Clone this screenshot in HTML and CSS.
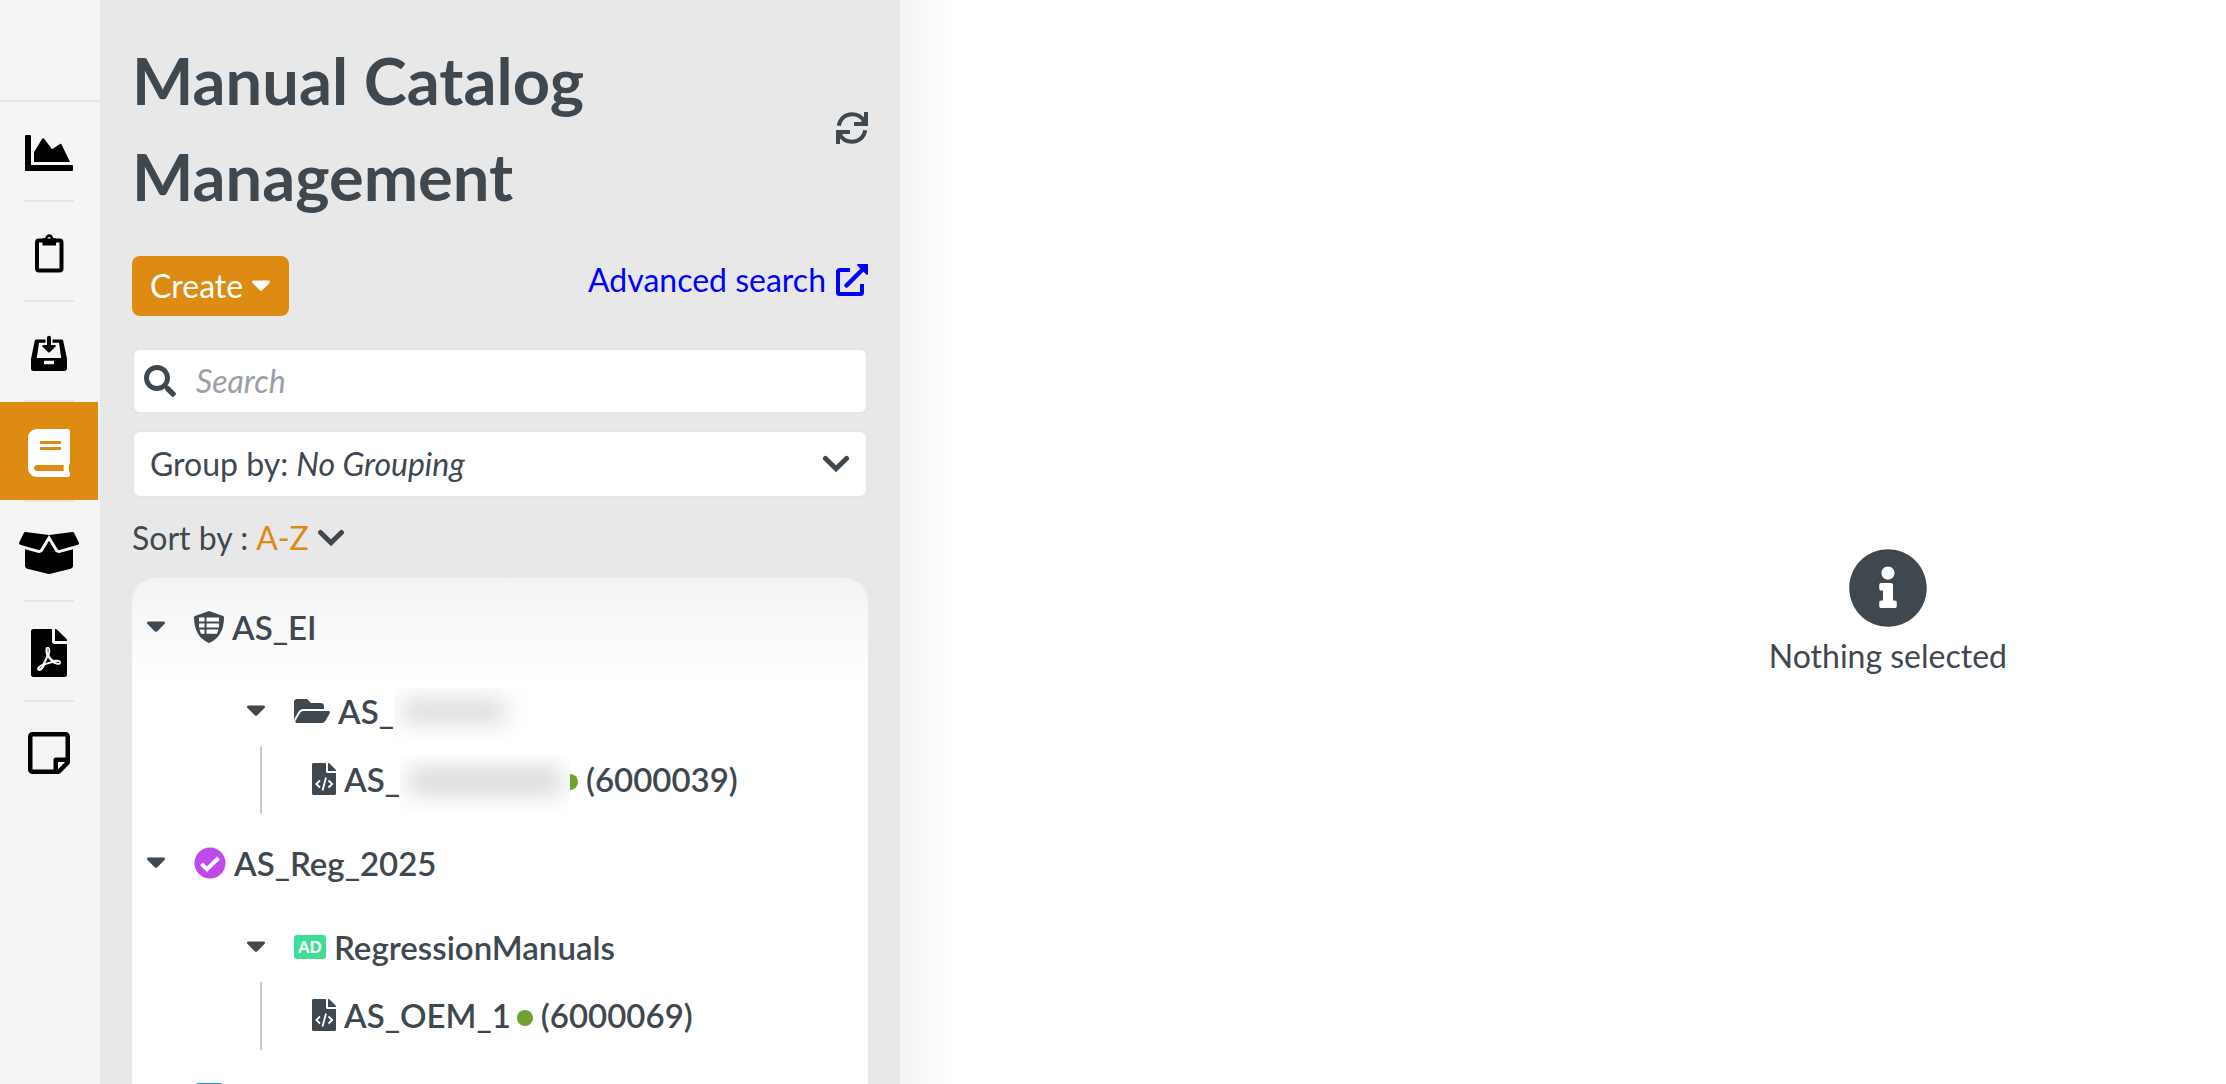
FILE: index.html
```html
<!DOCTYPE html>
<html lang="en">
<head>
    <meta charset="UTF-8">
    <meta name="viewport" content="width=device-width, initial-scale=1.0">
    <title>Manual Catalog Management</title>
    <link rel="stylesheet" href="styles.css">
</head>
<body>
    <!-- Shared icons -->
    <svg class="sprite" aria-hidden="true">
        <symbol id="caret" viewBox="0 0 20 12">
            <path d="M2.500 .5h15c1.500 0 2 1.500 1 2.500l-7.200 7.200c-.8.800-1.800.8-2.600 0L1.500 3c-1-1-.5-2.500 1-2.500z"/>
        </symbol>
        <symbol id="chevron" viewBox="0 0 28 18">
            <path d="M3.500 3.500L14 13.800 24.500 3.500" fill="none" stroke="currentColor" stroke-width="5" stroke-linecap="round"/>
        </symbol>
        <symbol id="file-code" viewBox="0 0 24 32">
            <path d="M14 0v8.500c0 .8.700 1.500 1.500 1.500H24v20.500c0 .8-.7 1.500-1.500 1.500h-21C.7 32 0 31.300 0 30.500v-29C0 .7.7 0 1.500 0zM16 0h.4c.4 0 .8.200 1.100.4l6.100 6.100c.2.300.4.700.4 1.100V8h-8z"/>
            <path d="M8 17.500L4.300 21 8 24.500M16.500 17.500L20.200 21l-3.700 3.500M14 14.500l-3.500 13" fill="none" stroke="#fff" stroke-width="1.800"/>
        </symbol>
    </svg>

    <div class="app">
        <nav class="sidebar">
            <div class="sidebar-top"></div>
            <a class="nav-item" href="#" aria-label="Dashboard">
                <svg width="48" height="48" viewBox="0 0 512 512"><path d="M500 384c6.600 0 12 5.400 12 12v40c0 6.600-5.400 12-12 12H12c-6.600 0-12-5.400-12-12V76c0-6.600 5.400-12 12-12h40c6.600 0 12 5.400 12 12v308h436zM372.700 159.500L288 216l-85.300-113.700c-5.100-6.800-15.500-6.300-19.900 1L96 248v104h384l-89.900-187.800c-3.200-6.500-11.400-8.700-17.400-4.700z"/></svg>
            </a>
            <a class="nav-item" href="#" aria-label="Tasks">
                <svg width="30" height="40" viewBox="0 0 30 40"><rect x="3" y="7.500" width="24.500" height="30" rx="2" fill="none" stroke="currentColor" stroke-width="4"/><path fill-rule="evenodd" d="M8.500 12.500V6.300c0-.6.400-1 1-1h1.700C11.500 3 13 1.200 15.200 1.200S19 3 19.300 5.300H21c.6 0 1 .4 1 1v6.200zM15.200 4a1.700 1.700 0 1 0 0 3.400 1.700 1.700 0 0 0 0-3.400z"/></svg>
            </a>
            <a class="nav-item" href="#" aria-label="Inbox">
                <svg width="36" height="36" viewBox="0 0 36 36"><path fill-rule="evenodd" d="M5.300 4.500h9.200v3.200H8L5.800 23h24.400L28 7.700h-6.500V4.500h9.200c.8 0 1.500.6 1.600 1.400L36 24v9.500c0 1.400-1.100 2.500-2.500 2.500h-31A2.500 2.500 0 0 1 0 33.500V24L3.700 5.900c.1-.8.800-1.400 1.600-1.400zM13 25.800v3.400h10v-3.400z"/><path d="M16 2.800a2 2 0 0 1 4 0V10h4c.8 0 1.200.9.600 1.500l-5.800 5.700c-.4.400-1.200.4-1.600 0l-5.800-5.700c-.6-.6-.2-1.500.6-1.500h4z"/></svg>
            </a>
            <a class="nav-item active" href="#" aria-label="Manuals">
                <svg width="42" height="48" viewBox="0 0 448 512"><path d="M448 360V24c0-13.300-10.700-24-24-24H96C43 0 0 43 0 96v320c0 53 43 96 96 96h328c13.300 0 24-10.700 24-24v-16c0-7.500-3.500-14.300-8.900-18.700-4.200-15.400-4.200-59.300 0-74.700 5.400-4.300 8.900-11.100 8.900-18.600zM128 134c0-3.300 2.700-6 6-6h212c3.300 0 6 2.700 6 6v20c0 3.300-2.700 6-6 6H134c-3.300 0-6-2.700-6-6v-20zm0 64c0-3.300 2.700-6 6-6h212c3.300 0 6 2.700 6 6v20c0 3.300-2.700 6-6 6H134c-3.300 0-6-2.700-6-6v-20zm253.400 250H96c-17.700 0-32-14.300-32-32 0-17.600 14.400-32 32-32h285.400c-1.900 17.100-1.900 46.900 0 64z"/></svg>
            </a>
            <a class="nav-item" href="#" aria-label="Packages">
                <svg width="60" height="48" viewBox="0 0 640 512"><path d="M425.700 256c-16.900 0-32.800-9-41.400-23.400L320 126l-64.200 106.600c-8.700 14.500-24.600 23.500-41.500 23.500-4.500 0-9-.6-13.300-1.900L64 215v178c0 14.700 10 27.500 24.200 31l216.200 54.100c10.200 2.500 20.900 2.500 31 0L551.800 424c14.200-3.600 24.200-16.400 24.200-31V215l-137 39.100c-4.300 1.300-8.800 1.900-13.300 1.900zm212.600-112.200L586.800 41c-3.100-6.200-9.800-9.800-16.700-8.900L320 64l91.700 152.100c3.800 6.300 11.400 9.300 18.500 7.300l197.900-56.500c9.900-2.900 14.700-13.900 10.200-23.100zM53.200 41L1.700 143.800c-4.600 9.200.3 20.200 10.100 23l197.900 56.500c7.100 2 14.700-1 18.500-7.300L320 64 69.800 32.100c-6.900-.8-13.500 2.700-16.600 8.900z"/></svg>
            </a>
            <a class="nav-item" href="#" aria-label="PDF">
                <svg width="36" height="48" viewBox="0 0 384 512"><path d="M181.900 256.100c-5-16-4.900-46.900-2-46.900 8.400 0 7.600 36.900 2 46.900zm-1.700 47.200c-7.700 20.200-17.300 43.300-28.400 62.700 18.300-7 39-17.200 62.900-21.900-12.700-9.600-24.900-23.400-34.500-40.800zM86.100 428.100c0 .8 13.200-5.400 34.900-40.200-6.700 6.300-29.100 24.500-34.900 40.200zM248 160h136v328c0 13.300-10.700 24-24 24H24c-13.300 0-24-10.700-24-24V24C0 10.700 10.700 0 24 0h200v136c0 13.200 10.800 24 24 24zm-8 171.800c-20-12.200-33.300-29-42.700-53.800 4.500-18.500 11.600-46.600 6.200-64.200-4.700-29.400-42.400-26.500-47.800-6.800-5 18.300-.4 44.100 8.100 77-11.600 27.600-28.700 64.600-40.800 85.800-.1 0-.1.100-.2.100-27.100 13.900-73.600 44.500-54.500 68 5.600 6.900 16 10 21.500 10 17.900 0 35.700-18 61.100-61.800 25.800-8.500 54.100-19.100 79-23.200 21.700 11.800 47.100 19.500 64 19.500 29.200 0 31.200-32 19.700-43.400-13.900-13.600-54.300-9.700-73.600-7.200zM377 105L279 7c-4.500-4.500-10.600-7-17-7h-6v128h128v-6.100c0-6.300-2.500-12.400-7-16.900zm-74.100 255.300c4.100-2.700-2.500-11.900-42.800-9 37.100 15.800 42.800 9 42.800 9z"/></svg>
            </a>
            <a class="nav-item" href="#" aria-label="Notes">
                <svg width="42" height="48" viewBox="0 0 448 512"><path d="M448 348.100V80c0-26.500-21.500-48-48-48H48C21.500 32 0 53.500 0 80v352c0 26.500 21.500 48 48 48h268.100a48 48 0 0 0 33.900-14.100l83.900-83.900a48 48 0 0 0 14.100-33.900zm-128 80v-76.100h76.100l-76.100 76.100zM400 80v224H296c-13.300 0-24 10.700-24 24v104H48V80h352z"/></svg>
            </a>
        </nav>

        <section class="catalog">
            <header class="catalog-header">
                <h1>Manual Catalog Management</h1>
                <button class="refresh" type="button" aria-label="Refresh">
                    <svg width="32" height="32" viewBox="0 0 32 32"><path d="M2.800 13.800C3.800 7 9 2.300 16 2.300c5.300 0 9.700 2.600 12.200 7" fill="none" stroke="currentColor" stroke-width="4"/><path d="M28 0h3.200c.5 0 .8.300.8.800V13c0 .6-.4 1-1 1H18.800c-.5 0-.8-.3-.8-.8V10h7l3-3z"/><path d="M29.200 18.200C28.200 25 23 29.700 16 29.700c-5.300 0-9.700-2.600-12.200-7" fill="none" stroke="currentColor" stroke-width="4"/><path d="M4 32H.8c-.5 0-.8-.3-.8-.8V19c0-.6.4-1 1-1h12.200c.5 0 .8.300.8.800V22H7l-3 3z"/></svg>
                </button>
            </header>

            <div class="actions">
                <button class="create" type="button">Create <svg width="20" height="12"><use href="#caret"/></svg></button>
                <a class="advanced" href="#">Advanced search
                    <svg width="32" height="32" viewBox="0 0 32 32"><path d="M14 6H3.500C2.700 6 2 6.700 2 7.500v21c0 .8.700 1.500 1.500 1.500h21c.8 0 1.500-.7 1.500-1.500V20" fill="none" stroke="currentColor" stroke-width="4"/><path d="M10.500 21.500L27 5" fill="none" stroke="currentColor" stroke-width="4.500" stroke-linecap="round"/><path d="M22 0h9c.6 0 1 .4 1 1v9c0 1-1 1.300-1.700.6l-9-9C20.700 1 21 0 22 0z"/></svg>
                </a>
            </div>

            <label class="field search">
                <svg width="32" height="32" viewBox="0 0 512 512"><path d="M505 442.700L405.300 343c-4.500-4.500-10.600-7-17-7H372c27.600-35.300 44-79.700 44-128C416 93.100 322.900 0 208 0S0 93.100 0 208s93.100 208 208 208c48.300 0 92.700-16.400 128-44v16.300c0 6.400 2.500 12.500 7 17l99.700 99.700c9.400 9.400 24.600 9.400 33.900 0l28.300-28.300c9.400-9.400 9.400-24.600.1-34zM208 336c-70.700 0-128-57.200-128-128 0-70.700 57.200-128 128-128 70.700 0 128 57.200 128 128 0 70.700-57.200 128-128 128z"/></svg>
                <input type="text" placeholder="Search" aria-label="Search">
            </label>

            <div class="field group">
                <label for="group-by">Group by:</label>
                <select id="group-by">
                    <option>No Grouping</option>
                </select>
                <svg width="28" height="18"><use href="#chevron"/></svg>
            </div>

            <div class="sort">
                <label for="sort-by">Sort by :</label>
                <select id="sort-by">
                    <option>A-Z</option>
                </select>
                <svg width="28" height="18"><use href="#chevron"/></svg>
            </div>

            <ul class="tree">
                <li class="node">
                    <div class="row">
                        <svg class="caret" width="20" height="12"><use href="#caret"/></svg>
                        <svg width="30" height="32" viewBox="0 0 30 32"><path d="M15 0l14 5c.6.200 1 .7 1 1.300C30 19 25 28 15 32 5 28 0 19 0 6.300 0 5.700.4 5.200 1 5z"/><path d="M5 6.500h5.500v4H5zM12.500 6.500H25v4H12.500zM5 12.500h5.500v4H5zM12.500 12.500H25v4H12.500zM5.500 18.500h5v4.300H7zM12.500 18.500h12L23 22.800H12.500z" fill="#fff"/></svg>
                        <span>AS_EI</span>
                    </div>
                    <ul class="folders">
                        <li>
                            <div class="row">
                                <svg class="caret" width="20" height="12"><use href="#caret"/></svg>
                                <svg width="36" height="32" viewBox="0 0 576 512"><path d="M572.700 292.100L500.300 416.200A64 64 0 0 1 445 448H45c-18.500 0-30-20.100-20.700-36.100l72.400-124.200A64 64 0 0 1 152 256h400c18.500 0 30 20.100 20.700 36.100zM152 224h328v-48c0-26.500-21.500-48-48-48H272l-64-64H48C21.500 64 0 85.500 0 112v278l69.100-118.400C86.200 242.300 118 224 152 224z"/></svg>
                                <span>AS_</span><span class="masked"></span>
                            </div>
                            <div class="row manual">
                                <svg width="24" height="32"><use href="#file-code"/></svg>
                                <span>AS_</span><span class="masked wide"></span><i class="dot"></i>
                                <span>(6000039)</span>
                            </div>
                        </li>
                    </ul>
                </li>
                <li class="node">
                    <div class="row">
                        <svg class="caret" width="20" height="12"><use href="#caret"/></svg>
                        <svg width="32" height="32" viewBox="0 0 32 32"><circle cx="16" cy="16" r="15.500" fill="#bf49ea"/><path d="M7.500 16.800l5.500 5.500L24.500 11" fill="none" stroke="#fff" stroke-width="4"/></svg>
                        <span>AS_Reg_2025</span>
                    </div>
                    <ul class="folders">
                        <li>
                            <div class="row">
                                <svg class="caret" width="20" height="12"><use href="#caret"/></svg>
                                <b class="ad">AD</b>
                                <span>RegressionManuals</span>
                            </div>
                            <div class="row manual">
                                <svg width="24" height="32"><use href="#file-code"/></svg>
                                <span>AS_OEM_1</span><i class="dot"></i>
                                <span>(6000069)</span>
                            </div>
                        </li>
                    </ul>
                </li>
                <li class="node">
                    <div class="row">
                        <svg class="caret" width="20" height="12"><use href="#caret"/></svg>
                        <svg width="30" height="32" viewBox="0 0 30 32"><rect x="2" width="26" height="32" rx="2" fill="#1c8fe3"/></svg>
                    </div>
                </li>
            </ul>
        </section>

        <main class="content">
            <div class="pane pane-list">
                <div class="drawer"></div>
            </div>
            <div class="pane pane-detail">
                <svg width="80" height="80" viewBox="0 0 512 512"><path d="M256 8C119 8 8 119.100 8 256c0 137 111 248 248 248s248-111 248-248C504 119.100 393 8 256 8zm0 110c23.200 0 42 18.800 42 42s-18.800 42-42 42-42-18.800-42-42 18.800-42 42-42zm56 254c0 6.600-5.400 12-12 12h-88c-6.600 0-12-5.400-12-12v-24c0-6.600 5.400-12 12-12h12v-64h-12c-6.600 0-12-5.400-12-12v-24c0-6.600 5.400-12 12-12h64c6.600 0 12 5.400 12 12v100h12c6.600 0 12 5.400 12 12v24z"/></svg>
                <p>Nothing selected</p>
            </div>
        </main>
    </div>
</body>
</html>
```

FILE: styles.css
```css
* {
    box-sizing: border-box;
}
body {
    margin: 0;
    font-family: Lato, "Liberation Sans", sans-serif;
    font-size: 32px;
    line-height: 48px;
    color: #40484f;
    background-color: #fff;
}
svg {
    display: block;
    flex-shrink: 0;
    fill: currentColor;
}
ul {
    list-style-type: none;
    margin: 0;
    padding: 0;
}
button,
input,
select {
    font: inherit;
    color: inherit;
    border: 0;
    padding: 0;
    background: none;
}
select {
    appearance: none;
}
.sprite {
    position: absolute;
    width: 0;
    height: 0;
}
.app {
    display: flex;
    height: 100vh;
    overflow: hidden;
}

/* Left icon bar */
.sidebar {
    flex: 0 0 100px;
    background-color: #f5f5f5;
}
.sidebar-top {
    height: 102px;
    border-bottom: 2px solid #e5e5e5;
}
.nav-item {
    display: flex;
    flex-direction: column;
    align-items: center;
    justify-content: center;
    width: 98px;
    height: 100px;
    padding-top: 4px;
    color: #000;
}
.nav-item svg {
    margin: auto;
}
.nav-item::after {
    content: "";
    width: 50px;
    height: 2px;
    background-color: #e5e5e5;
}
.nav-item:last-child::after {
    background: none;
}
.nav-item.active {
    color: #fff;
    background: linear-gradient(#dd8b13, #dd8b13) no-repeat 0 0 / 100% 98px;
}

/* Catalog panel */
.catalog {
    flex: 0 0 800px;
    display: flex;
    flex-direction: column;
    padding: 32px 32px 0;
    background-color: #e8e8e8;
}
.catalog-header {
    display: flex;
    align-items: center;
    justify-content: space-between;
    margin-bottom: 32px;
}
h1 {
    width: 600px;
    margin: 0;
    font-size: 65px;
    line-height: 96px;
    font-weight: bold;
}
.actions {
    display: flex;
    justify-content: space-between;
    align-items: flex-start;
    margin-bottom: 32px;
}
.create {
    display: flex;
    align-items: center;
    gap: 8px;
    height: 60px;
    padding: 0 18px;
    border-radius: 8px;
    color: #fff;
    background-color: #dd8b13;
}
.advanced {
    display: flex;
    align-items: center;
    gap: 10px;
    color: #0000fe;
    text-decoration: none;
}
.field {
    display: flex;
    align-items: center;
    border: 2px solid #e5e5e5;
    border-radius: 8px;
    background-color: #fff;
}
.search {
    height: 66px;
    padding: 0 10px;
    margin-bottom: 16px;
    gap: 20px;
}
.search input {
    flex: 1;
    min-width: 0;
    font-style: italic;
}
.search input::placeholder {
    color: #9aa0a6;
    opacity: 1;
}
.group {
    height: 68px;
    padding: 0 16px;
    gap: 8px;
}
.group select {
    flex: 1;
    font-style: italic;
}
.sort {
    display: flex;
    align-items: center;
    gap: 8px;
    margin: 16px 0;
}
.sort select {
    color: #dd8b13;
}

/* Tree of manuals */
.tree {
    flex: 1;
    min-height: 0;
    overflow: hidden;
    padding-top: 16px;
    border-radius: 24px 24px 0 0;
    background: linear-gradient(#f4f4f4, #fff 112px);
    font-size: 33px;
    font-weight: 600;
}
.node {
    padding-left: 14px;
    margin-bottom: 16px;
}
.row {
    display: flex;
    align-items: center;
    gap: 8px;
    height: 68px;
    padding-bottom: 2px;
}
.caret {
    margin-right: 20px;
}
.folders {
    margin-top: 16px;
    padding-left: 100px;
}
.manual {
    margin-left: 14px;
    padding-left: 50px;
    border-left: 2px solid #ccc;
}

/* Hidden part of a name */
.masked {
    width: 140px;
    height: 54px;
    margin-top: 8px;
    margin-left: -8px;
    padding: 12px 28px 20px 8px;
    overflow: hidden;
}
.masked::before {
    content: "";
    display: block;
    height: 100%;
    background-color: #d3d7d6;
    filter: blur(12px);
}
.masked.wide {
    width: 170px;
    height: 58px;
    margin-top: 12px;
    padding-right: 8px;
}
.dot {
    width: 16px;
    height: 16px;
    margin-top: 6px;
    margin-left: -2px;
    border-radius: 50%;
    background-color: #71a12f;
}
.masked + .dot {
    margin-left: -16px;
    clip-path: inset(0 0 0 50%);
}
.ad {
    width: 32px;
    height: 24px;
    border-radius: 3px;
    color: #fff;
    background-color: #40de94;
    font-size: 16px;
    line-height: 24px;
    font-weight: 900;
    text-align: center;
}

/* Right side */
.content {
    flex: 1;
    display: flex;
    background: linear-gradient(to right, #f4f4f4, #fff 56px);
}
.pane {
    display: flex;
    flex-direction: column;
    align-items: center;
}
.pane-list {
    flex: 49;
    justify-content: flex-end;
}
.drawer {
    width: 28%;
    box-shadow: 0 0 6px rgba(0, 0, 0, 0.1);
}
.pane-detail {
    flex: 51;
    justify-content: center;
    padding-top: 144px;
}
.pane-detail p {
    margin: 4px 0 0;
}
```
